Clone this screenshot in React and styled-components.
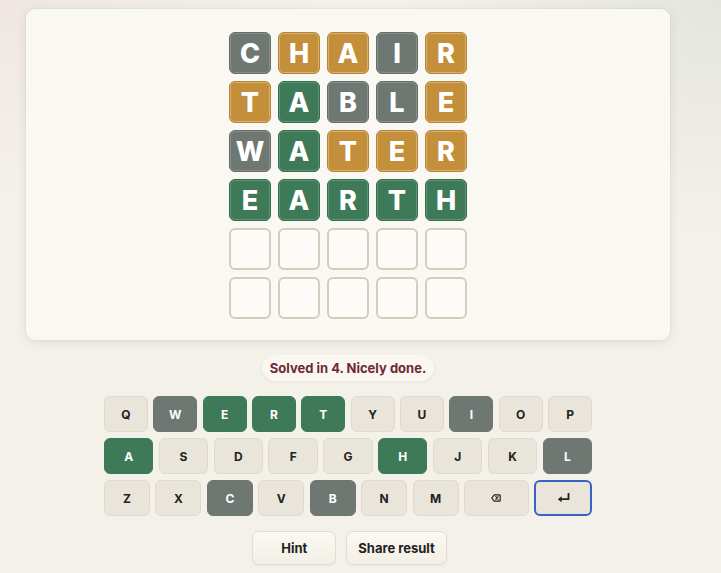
import React from "react";
import styled, { createGlobalStyle } from "styled-components";

const Global = createGlobalStyle`
  html, body { margin: 0; padding: 0; }
  body {
    width: 721px;
    height: 573px;
    overflow: hidden;
    font-family: Inter, "Liberation Sans", Arial, sans-serif;
    background:
      radial-gradient(ellipse 320px 200px at 0% 0%, #efe6e2 0%, rgba(239,230,226,0) 100%),
      radial-gradient(ellipse 320px 240px at 100% 0%, #e4e6dd 0%, rgba(228,230,221,0) 100%),
      #f4f1ea;
  }
`;

const Page = styled.div`
  display: flex;
  flex-direction: column;
  align-items: center;
  gap: 15px;
  padding-top: 9px;
  width: 721px;
  box-sizing: border-box;
  padding-right: 25px;
`;

const Card = styled.div`
  width: 644px;
  box-sizing: border-box;
  padding: 23px 0 21px;
  background: #faf8f3;
  border-radius: 9px;
  box-shadow: 0 2px 10px rgba(80, 70, 50, 0.12), 0 0 0 1px rgba(120, 110, 90, 0.04);
  display: flex;
  justify-content: center;
`;

const Board = styled.div`
  display: grid;
  grid-template-columns: repeat(5, 42px);
  grid-auto-rows: 42px;
  gap: 7px;
`;

const tileColors = {
  gray: { bg: "#6f7773", border: "#656d69", ring: "rgba(255,255,255,0.18)" },
  yellow: { bg: "#c48f3b", border: "#b88434", ring: "rgba(255,240,210,0.35)" },
  green: { bg: "#3e7a58", border: "#356e4e", ring: "rgba(220,255,235,0.2)" },
};

const Tile = styled.div`
  box-sizing: border-box;
  border-radius: 6px;
  display: flex;
  align-items: center;
  justify-content: center;
  font-size: 27px;
  font-weight: 800;
  color: #ffffff;
  ${({ $state }) =>
    $state
      ? `background: ${tileColors[$state].bg};
         border: 1px solid ${tileColors[$state].border};
         box-shadow: inset 0 0 0 1px ${tileColors[$state].ring};`
      : `background: #fdfbf7;
         border: 2px solid #d5ccbf;`}
`;

const Pill = styled.div`
  padding: 0 8px;
  height: 26px;
  display: flex;
  align-items: center;
  border-radius: 13px;
  background: #faf7f1;
  box-shadow: 0 1px 3px rgba(80, 70, 50, 0.08);
  color: #6e2834;
  font-size: 13px;
  font-weight: 700;
`;

const Keyboard = styled.div`
  width: 488px;
  display: flex;
  flex-direction: column;
  gap: 6px;
`;

const KeyRow = styled.div`
  display: flex;
  gap: 5.5px;
`;

const keyColors = {
  gray: { bg: "#6f7773", color: "#ffffff", border: "#6f7773" },
  green: { bg: "#3e7a58", color: "#ffffff", border: "#3e7a58" },
};

const Key = styled.div`
  flex: ${({ $grow }) => $grow || 1} 1 0;
  height: 36px;
  box-sizing: border-box;
  border-radius: 6px;
  display: flex;
  align-items: center;
  justify-content: center;
  font-size: 12px;
  font-weight: 700;
  background: ${({ $state }) => ($state ? keyColors[$state].bg : "#eae5da")};
  color: ${({ $state }) => ($state ? keyColors[$state].color : "#222222")};
  border: ${({ $focus, $state }) =>
    $focus ? "2px solid #3b62c2" : `1px solid ${$state ? keyColors[$state].border : "#e0d9cc"}`};
`;

const Actions = styled.div`
  display: flex;
  gap: 10px;
  padding-left: 3px;
`;

const Button = styled.button`
  height: 34px;
  padding: 0 ${({ $pad }) => $pad}px;
  border-radius: 7px;
  border: 1px solid #e3dccf;
  background: linear-gradient(#fbf9f4, #f3efe6);
  box-shadow: 0 1px 2px rgba(80, 70, 50, 0.06);
  font-family: inherit;
  font-size: 13px;
  font-weight: 700;
  color: #222222;
`;

const rows = [
  [["C", "gray"], ["H", "yellow"], ["A", "yellow"], ["I", "gray"], ["R", "yellow"]],
  [["T", "yellow"], ["A", "green"], ["B", "gray"], ["L", "gray"], ["E", "yellow"]],
  [["W", "gray"], ["A", "green"], ["T", "yellow"], ["E", "yellow"], ["R", "yellow"]],
  [["E", "green"], ["A", "green"], ["R", "green"], ["T", "green"], ["H", "green"]],
];

const keyState = {
  W: "gray", E: "green", R: "green", T: "green", I: "gray",
  A: "green", H: "green", L: "gray", C: "gray", B: "gray",
};

const BackspaceIcon = () => (
  <svg width="10" height="8" viewBox="0 0 10 8" fill="none">
    <path d="M3.2 0.8h5.3a0.7 0.7 0 0 1 .7.7v5a0.7 0.7 0 0 1 -.7.7H3.2L0.8 4z" stroke="#222" strokeWidth="1.2" strokeLinejoin="round" />
    <path d="M4.8 2.7l2.4 2.6M7.2 2.7l-2.4 2.6" stroke="#222" strokeWidth="1.1" strokeLinecap="round" />
  </svg>
);

const EnterIcon = () => (
  <svg width="13" height="10" viewBox="0 0 13 10" fill="none">
    <path d="M11.5 0.8v5.4H4" stroke="#222" strokeWidth="1.8" strokeLinecap="square" strokeLinejoin="miter" />
    <path d="M0.8 6.2L4.6 3.2v6z" fill="#222" />
  </svg>
);

export default function App() {
  return (
    <>
      <Global />
      <Page>
        <Card>
          <Board>
            {rows.flatMap((r, i) =>
              r.map(([l, s], j) => (
                <Tile key={`${i}-${j}`} $state={s}>
                  {l}
                </Tile>
              ))
            )}
            {Array.from({ length: 10 }).map((_, i) => (
              <Tile key={`e${i}`} />
            ))}
          </Board>
        </Card>
        <Pill>Solved in 4. Nicely done.</Pill>
        <Keyboard>
          <KeyRow>
            {"QWERTYUIOP".split("").map((k) => (
              <Key key={k} $state={keyState[k]}>{k}</Key>
            ))}
          </KeyRow>
          <KeyRow>
            {"ASDFGHJKL".split("").map((k) => (
              <Key key={k} $state={keyState[k]}>{k}</Key>
            ))}
          </KeyRow>
          <KeyRow>
            {"ZXCVBNM".split("").map((k) => (
              <Key key={k} $state={keyState[k]}>{k}</Key>
            ))}
            <Key $grow={1.43}><BackspaceIcon /></Key>
            <Key $grow={1.22} $focus><EnterIcon /></Key>
          </KeyRow>
        </Keyboard>
        <Actions>
          <Button $pad={28}>Hint</Button>
          <Button $pad={11}>Share result</Button>
        </Actions>
      </Page>
    </>
  );
}
